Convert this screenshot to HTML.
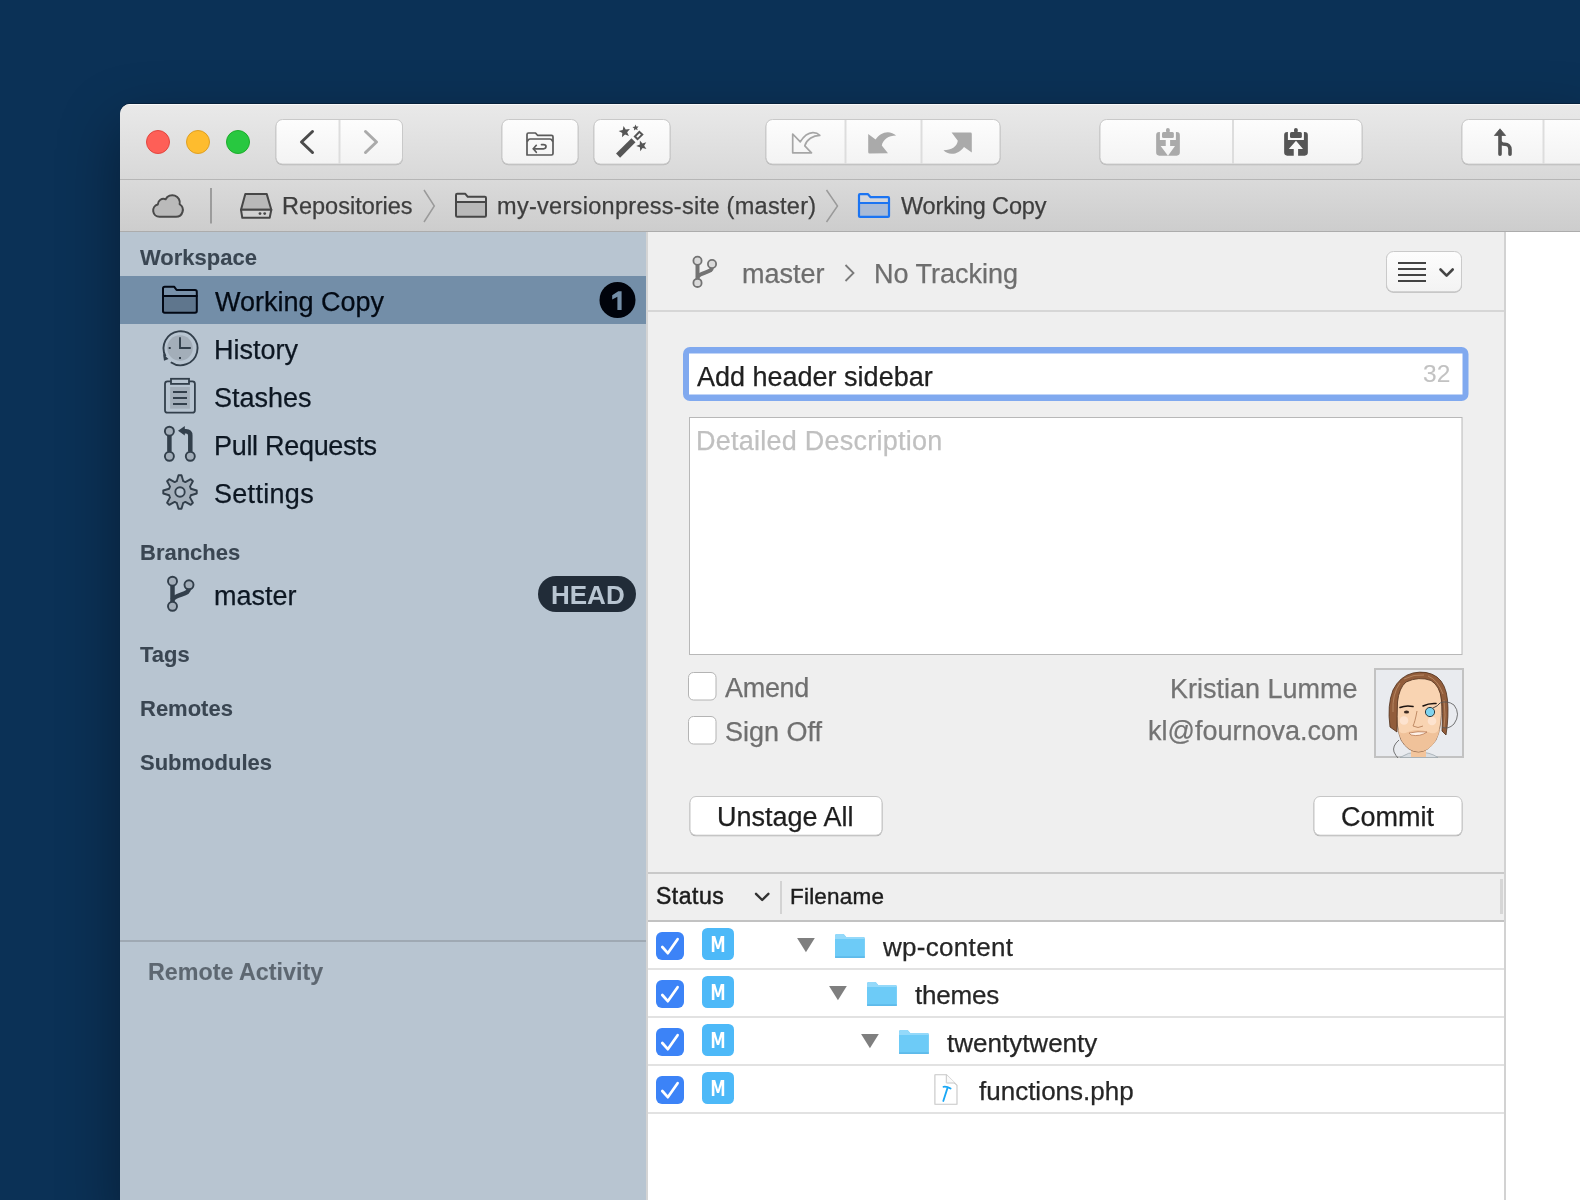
<!DOCTYPE html>
<html><head><meta charset="utf-8">
<style>
html,body{margin:0;padding:0;}
body{width:1580px;height:1200px;overflow:hidden;background:#0b3156;position:relative;font-family:"Liberation Sans",sans-serif;}
.a{position:absolute;}
.t{position:absolute;white-space:nowrap;line-height:normal;font-family:"Liberation Sans",sans-serif;will-change:transform;}
#win{left:120px;top:104px;width:1470px;height:1110px;border-radius:10px 0 0 0;overflow:hidden;background:#efefef;box-shadow:0 -1px 0 0 rgba(0,0,0,0.25),0 22px 60px rgba(0,0,0,0.38);}
#toolbar{left:0;top:0;width:1470px;height:75px;background:linear-gradient(#e9e9e9,#d8d8d8);border-top:1px solid #f9f9f9;}
#tbline{left:0;top:75px;width:1470px;height:1px;background:#b6b6b6;}
#crumb{left:0;top:76px;width:1470px;height:51px;background:linear-gradient(#dadada,#cdcdcd);}
#crline{left:0;top:127px;width:1470px;height:1px;background:#acacac;}
#side{left:0;top:128px;width:526px;height:1000px;background:#b8c5d1;}
#sidediv{left:526px;top:128px;width:2px;height:1000px;background:#d4d4d4;}
#main{left:528px;top:128px;width:856px;height:1000px;background:#efefef;}
#rline{left:1384px;top:128px;width:2px;height:1000px;background:#d2d2d2;}
#right{left:1386px;top:128px;width:200px;height:1000px;background:#ffffff;}
svg{position:absolute;left:0;top:0;}
</style></head>
<body>
<div id="win" class="a">
  <div id="toolbar" class="a"></div>
  <div id="tbline" class="a"></div>
  <div id="crumb" class="a"></div>
  <div id="crline" class="a"></div>
  <div id="side" class="a"></div>
  <div id="sidediv" class="a"></div>
  <div id="main" class="a"></div>
  <div id="rline" class="a"></div>
  <div id="right" class="a"></div>
</div>
<svg width="1580" height="1200" viewBox="0 0 1580 1200">
<circle cx="158" cy="142" r="11.5" fill="#fe5f57" stroke="#e2463f" stroke-width="1"/>
<circle cx="198" cy="142" r="11.5" fill="#febc2e" stroke="#dfa023" stroke-width="1"/>
<circle cx="238" cy="142" r="11.5" fill="#28c840" stroke="#1dad2b" stroke-width="1"/>
<defs><linearGradient id="bg" x1="0" y1="0" x2="0" y2="1"><stop offset="0" stop-color="#fdfdfd"/><stop offset="1" stop-color="#f3f3f3"/></linearGradient><linearGradient id="bb" x1="0" y1="0" x2="0" y2="1"><stop offset="0" stop-color="#ffffff"/><stop offset="1" stop-color="#ffffff"/></linearGradient></defs>
<rect x="275.5" y="120" width="127.5" height="45.3" rx="7" fill="#b9b9b9"/>
<rect x="276.0" y="119.5" width="126.5" height="44.6" rx="6.5" fill="url(#bg)" stroke="#c9c9c9" stroke-width="1"/>
<rect x="338.5" y="120" width="2" height="44" fill="#dddddd"/>
<rect x="501.5" y="120" width="77.0" height="45.3" rx="7" fill="#b9b9b9"/>
<rect x="502.0" y="119.5" width="76.0" height="44.6" rx="6.5" fill="url(#bg)" stroke="#c9c9c9" stroke-width="1"/>
<rect x="593.5" y="120" width="77.0" height="45.3" rx="7" fill="#b9b9b9"/>
<rect x="594.0" y="119.5" width="76.0" height="44.6" rx="6.5" fill="url(#bg)" stroke="#c9c9c9" stroke-width="1"/>
<rect x="765.5" y="120" width="235.0" height="45.3" rx="7" fill="#b9b9b9"/>
<rect x="766.0" y="119.5" width="234.0" height="44.6" rx="6.5" fill="url(#bg)" stroke="#c9c9c9" stroke-width="1"/>
<rect x="844.5" y="120" width="2" height="44" fill="#dddddd"/>
<rect x="920.5" y="120" width="2" height="44" fill="#dddddd"/>
<rect x="1099.5" y="120" width="263.0" height="45.3" rx="7" fill="#b9b9b9"/>
<rect x="1100.0" y="119.5" width="262.0" height="44.6" rx="6.5" fill="url(#bg)" stroke="#c9c9c9" stroke-width="1"/>
<rect x="1232" y="120" width="2" height="44" fill="#dddddd"/>
<rect x="1461.5" y="120" width="178.5" height="45.3" rx="7" fill="#b9b9b9"/>
<rect x="1462.0" y="119.5" width="177.5" height="44.6" rx="6.5" fill="url(#bg)" stroke="#c9c9c9" stroke-width="1"/>
<rect x="1542.5" y="120" width="2" height="44" fill="#dddddd"/>
<polyline points="312.5,131.5 301.5,142 312.5,152.5" fill="none" stroke="#4b4b4b" stroke-width="3" stroke-linecap="round" stroke-linejoin="round"/>
<polyline points="365.5,131.5 376.5,142 365.5,152.5" fill="none" stroke="#aaaaaa" stroke-width="3" stroke-linecap="round" stroke-linejoin="round"/>
<g fill="none" stroke="#5a5a5a" stroke-width="1.7" stroke-linejoin="round" stroke-linecap="round"><path d="M527,155 L527,134.5 Q527,133 528.5,133 L535.5,133 L537.5,135.3 L551.5,135.3 Q553,135.3 553,136.8 L553,153.5 Q553,155 551.5,155 Z"/><path d="M527.5,141 Q528.5,139 530,139 L550,139 Q551.5,139 552.5,141"/><path d="M533.5,148.8 L543.5,148.8 Q546,148.8 546,146.6 Q546,144.6 543.5,144.6 L541.5,144.6"/><path d="M536.3,145.3 L533.3,148.8 L536.3,152.3"/></g>
<g fill="#555555"><path d="M616.05,153.55 L631.45,138.33 L635.48,142.37 L620.08,157.77 Z"/><path d="M633.5,136.5 L639.3,130.45 L643.7,134.5 L637.5,140.6 Z M636.3,136.5 L639.4,133.3 L640.9,134.6 L637.8,137.8 Z" fill-rule="evenodd"/></g>
<polygon points="623.56,125.99 625.74,129.56 629.90,129.08 627.17,132.26 628.92,136.07 625.05,134.46 621.97,137.29 622.30,133.12 618.66,131.06 622.73,130.09" fill="#555555"/>
<polygon points="635.32,124.61 636.37,126.51 638.55,126.55 637.06,128.14 637.70,130.22 635.73,129.29 633.95,130.54 634.22,128.39 632.48,127.08 634.62,126.67" fill="#555555"/>
<polygon points="639.88,140.54 642.46,143.49 646.21,142.35 644.20,145.72 646.44,148.93 642.62,148.06 640.26,151.18 639.91,147.28 636.20,146.00 639.81,144.46" fill="#555555"/>
<path d="M792.7,152.8 L792.7,134 L800.3,141.8 C803.5,136.5 808,132.8 812.8,132.6 C815.5,132.5 818,133.5 819.8,135.3 C813,135.5 806.5,139.5 804.8,145.8 L811.5,152.8 Z" fill="none" stroke="#a6a6a6" stroke-width="1.7" stroke-linejoin="round"/>
<path d="M868.2,152 L868.2,134 L875.6,139.6 C878.5,135 883,132.2 887.7,132.2 C890.8,132.2 894,133.5 896.1,135.5 C888.5,135.5 883,139.5 881.8,145.5 L888,153.2 L869.5,153.5 Q868.2,153.5 868.2,152 Z" fill="#aaaaaa"/>
<path d="M971.8,134 L971.8,152.4 L964,146.9 C961,151 956.5,153.8 951.6,153.8 C948.5,153.8 945.5,152.3 943.5,150.2 C951.5,150.2 957,146.5 957.8,140.7 L951.6,132.6 L970.4,132.6 Q971.8,132.6 971.8,134 Z" fill="#aaaaaa"/>
<path d="M1156.15,135 Q1156.15,132 1159.2,132 L1159.9,132 L1159.9,139.9 L1175.9,139.9 L1175.9,132 L1176.7,132 Q1179.85,132 1179.85,135 L1179.85,152.6 Q1179.85,155.65 1176.7,155.65 L1159.2,155.65 Q1156.15,155.65 1156.15,152.6 Z M1165.75,139.9 L1170.1,139.9 L1170.1,146 L1175,146 L1168,155.65 L1160.65,146 L1165.75,146 Z" fill="#aaaaaa" fill-rule="evenodd"/>
<rect x="1162" y="132.1" width="11.85" height="5.9" rx="1.5" fill="#aaaaaa"/>
<rect x="1166" y="127.9" width="3.8" height="5" rx="1.9" fill="#aaaaaa"/>
<path d="M1284.15,135 Q1284.15,132 1287.2,132 L1287.9,132 L1287.9,139.9 L1303.9,139.9 L1303.9,132 L1304.7,132 Q1307.85,132 1307.85,135 L1307.85,152.6 Q1307.85,155.65 1304.7,155.65 L1287.2,155.65 Q1284.15,155.65 1284.15,152.6 Z M1296,140.8 L1303,148.9 L1298.1,148.9 L1298.1,155.65 L1293.75,155.65 L1293.75,148.9 L1288.8,148.9 Z" fill="#555555" fill-rule="evenodd"/>
<rect x="1290" y="132.1" width="11.85" height="5.9" rx="1.5" fill="#555555"/>
<rect x="1294" y="127.9" width="3.8" height="5" rx="1.9" fill="#555555"/>
<path d="M1494.4,135.5 L1500,128.8 L1505.6,135.5 Z" fill="#555555" stroke="#555555" stroke-width="0.8" stroke-linejoin="round"/>
<path d="M1500,135 L1500,154.2 M1500,140.5 C1500,143 1502.5,144.3 1505,144.3 C1508,144.3 1510,146.5 1510,149.5 L1510,154.2" fill="none" stroke="#555555" stroke-width="3.6" stroke-linecap="round"/>
<path d="M159.5,216.8 L176,216.8 A6.8,6.8 0 0 0 179.64,204.26 A7.5,7.5 0 0 0 165.66,199.2 A5.7,5.7 0 0 0 157.8,204.43 A6.3,6.3 0 0 0 159.5,216.8 Z" fill="#bababa" stroke="#4a4a4a" stroke-width="2" stroke-linejoin="round"/>
<line x1="211" y1="188" x2="211" y2="223.5" stroke="#8e8e8e" stroke-width="1.6"/>
<g stroke="#474747" stroke-width="2" stroke-linejoin="round"><path d="M245.3,193.9 L266.7,193.9 L271.3,209.8 L241,209.8 Z" fill="#b9b9b9"/><path d="M241,209.8 L271.3,209.8 L269.7,217.8 L242.3,217.8 Z" fill="#d2d2d2"/></g><circle cx="260" cy="213.6" r="1.4" fill="#474747"/><circle cx="264.7" cy="213.6" r="1.4" fill="#474747"/>
<polyline points="424,190 434.3,206 424,222" fill="none" stroke="#9a9a9a" stroke-width="1.5"/>
<polyline points="826.5,190 837.5,206 826.5,222" fill="none" stroke="#9a9a9a" stroke-width="1.5"/>
<g stroke="#474747" stroke-width="2" stroke-linejoin="round"><path d="M456,202 L456,195 Q456,193.8 457.2,193.8 L465.3,193.8 L467.8,196.8 L484.8,196.8 Q486,196.8 486,198 L486,202 Z" fill="#d6d6d6"/><path d="M456,202 L486,202 L486,215.6 Q486,216.8 484.8,216.8 L457.2,216.8 Q456,216.8 456,215.6 Z" fill="#b9b9b9"/></g>
<g stroke="#1b74f2" stroke-width="2.2" stroke-linejoin="round"><path d="M859,203 L859,195.2 Q859,194.2 860,194.2 L868,194.2 L870.6,197.2 L888,197.2 Q889,197.2 889,198.2 L889,203 Z" fill="#d3d6dc"/><path d="M859,203 L889,203 L889,215.9 Q889,216.9 888,216.9 L860,216.9 Q859,216.9 859,215.9 Z" fill="#a9bbd6"/></g>
<rect x="120" y="276" width="526" height="48" fill="#738ea8"/>
<g stroke="#020814" stroke-width="2" stroke-linejoin="round"><path d="M163,296 L163,288.5 Q163,286.8 164.7,286.8 L174.3,286.8 L176.6,290 L195,290 Q196.8,290 196.8,291.7 L196.8,296 Z" fill="#7891aa"/><path d="M163,296 L196.8,296 L196.8,311 Q196.8,312.8 195,312.8 L164.7,312.8 Q163,312.8 163,311 Z" fill="#5f768d"/></g>
<circle cx="617.5" cy="300" r="18" fill="#00030b"/>
<path d="M612.2,295.2 L618.3,291.2 L621.6,291.2 L621.6,310 L617.4,310 L617.4,296.8 L612.2,299.4 Z" fill="#738ea8"/>
<circle cx="180" cy="348" r="12.8" fill="#a3aeb9"/>
<path d="M170.8,362.2 A17,17 0 1 0 165.5,356.2" fill="none" stroke="#323f4b" stroke-width="1.9"/>
<path d="M163,353.8 L168.5,359 L164,360.8 Z" fill="#323f4b"/>
<path d="M180,337.2 L180,348 L190.8,348" fill="none" stroke="#323f4b" stroke-width="1.9"/>
<rect x="168.7" y="347" width="2" height="2" fill="#323f4b"/><rect x="179" y="357" width="2" height="2" fill="#323f4b"/>
<rect x="170.1" y="387" width="19.8" height="21.7" fill="#a3aeb9"/>
<path d="M171,381.3 L167.5,381.3 Q165,381.3 165,383.8 L165,410.2 Q165,412.7 167.5,412.7 L192.4,412.7 Q194.9,412.7 194.9,410.2 L194.9,383.8 Q194.9,381.3 192.4,381.3 L189,381.3" fill="none" stroke="#323f4b" stroke-width="1.8"/>
<rect x="171" y="378.8" width="18" height="5.1" fill="none" stroke="#323f4b" stroke-width="1.8"/>
<path d="M173,392 L187,392 M173,398 L187,398 M173,404 L187,404" stroke="#323f4b" stroke-width="1.8"/>
<path d="M169.4,436 L169.4,451.5" stroke="#323f4b" stroke-width="4.5"/>
<path d="M190.3,451.5 L190.3,435.5 Q190.3,431.2 186,431.2 L183,431.2" fill="none" stroke="#323f4b" stroke-width="4.5"/>
<path d="M178,430.8 L184.8,426 L184.8,435.6 Z" fill="#323f4b"/>
<circle cx="169.4" cy="431.2" r="4.5" fill="#a3aeb9" stroke="#323f4b" stroke-width="1.9"/>
<circle cx="169.4" cy="456.3" r="4.5" fill="#a3aeb9" stroke="#323f4b" stroke-width="1.9"/>
<circle cx="190.3" cy="456.3" r="4.5" fill="#a3aeb9" stroke="#323f4b" stroke-width="1.9"/>
<polygon points="175.68,481.56 176.75,481.18 178.50,475.27 181.50,475.27 183.25,481.18 184.32,481.56 185.35,482.05 190.77,479.11 192.89,481.23 189.95,486.65 190.44,487.68 190.82,488.75 196.73,490.50 196.73,493.50 190.82,495.25 190.44,496.32 189.95,497.35 192.89,502.77 190.77,504.89 185.35,501.95 184.32,502.44 183.25,502.82 181.50,508.73 178.50,508.73 176.75,502.82 175.68,502.44 174.65,501.95 169.23,504.89 167.11,502.77 170.05,497.35 169.56,496.32 169.18,495.25 163.27,493.50 163.27,490.50 169.18,488.75 169.56,487.68 170.05,486.65 167.11,481.23 169.23,479.11 174.65,482.05" fill="#a3aeb9" stroke="#323f4b" stroke-width="1.9" stroke-linejoin="round"/>
<circle cx="180" cy="492" r="4.7" fill="#b8c4d0" stroke="#323f4b" stroke-width="1.9"/>
<path d="M172.5,585.2 L172.5,602.2" stroke="#323f4b" stroke-width="4.5"/>
<path d="M172.5,599.7 C174.5,595.7 183.5,594.7 187.0,592.2 Q189.0,590.2 189.0,588.2" fill="none" stroke="#323f4b" stroke-width="4.5"/>
<circle cx="172.5" cy="581.2" r="4.5" fill="#a3aeb9" stroke="#323f4b" stroke-width="1.9"/>
<circle cx="172.5" cy="606.3000000000001" r="4.5" fill="#a3aeb9" stroke="#323f4b" stroke-width="1.9"/>
<circle cx="189.0" cy="584.8000000000001" r="4.5" fill="#a3aeb9" stroke="#323f4b" stroke-width="1.9"/>
<rect x="538" y="576" width="98" height="36" rx="18" fill="#212c38"/>
<rect x="120" y="940" width="526" height="2" fill="#9fa9b3"/>
<path d="M697.5,264.32 L697.5,279.28000000000003" stroke="#737373" stroke-width="4.0"/>
<path d="M697.5,277.08000000000004 C699.26,273.56 707.18,272.68 710.26,270.48 Q712.02,268.72 712.02,266.96000000000004" fill="none" stroke="#737373" stroke-width="4.0"/>
<circle cx="697.5" cy="260.8" r="4.1" fill="#dadada" stroke="#737373" stroke-width="1.8"/>
<circle cx="697.5" cy="282.88800000000003" r="4.1" fill="#dadada" stroke="#737373" stroke-width="1.8"/>
<circle cx="712.02" cy="263.968" r="4.1" fill="#dadada" stroke="#737373" stroke-width="1.8"/>
<polyline points="845.5,265 853.5,273 845.5,281" fill="none" stroke="#7a7a7a" stroke-width="1.8"/>
<rect x="648" y="310" width="856" height="2" fill="#d6d6d6"/>
<rect x="1386" y="252" width="76" height="40.8" rx="7.5" fill="#b9b9b9"/>
<rect x="1386.5" y="251.5" width="75" height="40.3" rx="7" fill="url(#bg)" stroke="#cacaca" stroke-width="1"/>
<path d="M1398,263 L1426,263 M1398,269 L1426,269 M1398,275 L1426,275 M1398,281 L1426,281" stroke="#444444" stroke-width="2"/>
<polyline points="1440.5,269.5 1446.6,275.6 1452.7,269.5" fill="none" stroke="#444444" stroke-width="2.6" stroke-linecap="round" stroke-linejoin="round"/>
<rect x="683" y="347" width="785.5" height="54" rx="7" fill="#80a9ef"/>
<rect x="689" y="353.5" width="773.5" height="41" fill="#ffffff"/>
<rect x="689.5" y="417.5" width="772.5" height="237" fill="#ffffff" stroke="#b8b8b8" stroke-width="1"/>
<rect x="688.5" y="672.5" width="27.5" height="27.5" rx="5" fill="#ffffff" stroke="#b4b4b4" stroke-width="1"/>
<rect x="688.5" y="716.5" width="27.5" height="27.5" rx="5" fill="#ffffff" stroke="#b4b4b4" stroke-width="1"/>
<rect x="1375" y="669" width="88" height="88" fill="#e9ebef" stroke="#c2c2c2" stroke-width="2"/>
<rect x="689.5" y="797" width="193.0" height="39.3" rx="6.5" fill="#b3b3b3"/>
<rect x="690.0" y="796.5" width="192.0" height="38.7" rx="6" fill="#ffffff" stroke="#c6c6c6" stroke-width="1"/>
<rect x="1313.5" y="797" width="149.0" height="39.3" rx="6.5" fill="#b3b3b3"/>
<rect x="1314.0" y="796.5" width="148.0" height="38.7" rx="6" fill="#ffffff" stroke="#c6c6c6" stroke-width="1"/>
<rect x="648" y="872" width="856" height="2" fill="#c9c9c9"/>
<rect x="648" y="874" width="856" height="46" fill="#efefef"/>
<rect x="648" y="920" width="856" height="2" fill="#c2c2c2"/>
<rect x="648" y="922" width="856" height="300" fill="#ffffff"/>
<rect x="780" y="881" width="2" height="33" fill="#d3d3d3"/>
<rect x="1500" y="879" width="3" height="35" fill="#d6d6d6"/>
<polyline points="756,893.8 762.2,900 768.4,893.8" fill="none" stroke="#333333" stroke-width="2.4" stroke-linecap="round" stroke-linejoin="round"/>
<rect x="648" y="968" width="856" height="2" fill="#e2e2e2"/>
<rect x="656" y="932" width="28" height="28" rx="6" fill="#3c83f7"/>
<polyline points="662.3,947 667.8,953.2 677.6,939.2" fill="none" stroke="#ffffff" stroke-width="2.7" stroke-linecap="round" stroke-linejoin="round"/>
<rect x="702" y="928" width="32" height="32" rx="5.5" fill="#4db9f8"/>
<polygon points="711.8,952.0 711.8,936.0 715.2,936.0 718.0,945.6 720.8,936.0 724.2,936.0 724.2,952.0 721.6,952.0 721.6,941.0 719.1,949.0 716.9,949.0 714.4,941.0 714.4,952.0" fill="#ffffff"/>
<polygon points="797.1,938.1 814.8,938.1 805.95,952.3" fill="#7f7f7f"/>
<path d="M835,955.9 L835,935.8 Q835,934.1 836.7,934.1 L843.6,934.1 L846.2,937.1 L863.2,937.1 Q864.9,937.1 864.9,938.8 L864.9,956.2 Q864.9,957.9 863.2,957.9 L836.7,957.9 Q835,957.9 835,956.2 Z" fill="#6dcbf7"/>
<path d="M835,936 Q835,934.1 836.7,934.1 L843.6,934.1 L846.2,937.1 L863.2,937.1 Q864.9,937.1 864.9,938.8 L864.9,939 L835,939 Z" fill="#94d9fa"/>
<rect x="835" y="956.3" width="29.9" height="1.6" fill="#5cb8e8"/>
<rect x="648" y="1016" width="856" height="2" fill="#e2e2e2"/>
<rect x="656" y="980" width="28" height="28" rx="6" fill="#3c83f7"/>
<polyline points="662.3,995 667.8,1001.2 677.6,987.2" fill="none" stroke="#ffffff" stroke-width="2.7" stroke-linecap="round" stroke-linejoin="round"/>
<rect x="702" y="976" width="32" height="32" rx="5.5" fill="#4db9f8"/>
<polygon points="711.8,1000.0 711.8,984.0 715.2,984.0 718.0,993.6 720.8,984.0 724.2,984.0 724.2,1000.0 721.6,1000.0 721.6,989.0 719.1,997.0 716.9,997.0 714.4,989.0 714.4,1000.0" fill="#ffffff"/>
<polygon points="829.1,986.1 846.8,986.1 837.95,1000.3" fill="#7f7f7f"/>
<path d="M867,1003.9 L867,983.8 Q867,982.1 868.7,982.1 L875.6,982.1 L878.2,985.1 L895.2,985.1 Q896.9,985.1 896.9,986.8 L896.9,1004.2 Q896.9,1005.9 895.2,1005.9 L868.7,1005.9 Q867,1005.9 867,1004.2 Z" fill="#6dcbf7"/>
<path d="M867,984 Q867,982.1 868.7,982.1 L875.6,982.1 L878.2,985.1 L895.2,985.1 Q896.9,985.1 896.9,986.8 L896.9,987 L867,987 Z" fill="#94d9fa"/>
<rect x="867" y="1004.3" width="29.9" height="1.6" fill="#5cb8e8"/>
<rect x="648" y="1064" width="856" height="2" fill="#e2e2e2"/>
<rect x="656" y="1028" width="28" height="28" rx="6" fill="#3c83f7"/>
<polyline points="662.3,1043 667.8,1049.2 677.6,1035.2" fill="none" stroke="#ffffff" stroke-width="2.7" stroke-linecap="round" stroke-linejoin="round"/>
<rect x="702" y="1024" width="32" height="32" rx="5.5" fill="#4db9f8"/>
<polygon points="711.8,1048.0 711.8,1032.0 715.2,1032.0 718.0,1041.6 720.8,1032.0 724.2,1032.0 724.2,1048.0 721.6,1048.0 721.6,1037.0 719.1,1045.0 716.9,1045.0 714.4,1037.0 714.4,1048.0" fill="#ffffff"/>
<polygon points="861.1,1034.1 878.8,1034.1 869.95,1048.3" fill="#7f7f7f"/>
<path d="M899,1051.9 L899,1031.8 Q899,1030.1 900.7,1030.1 L907.6,1030.1 L910.2,1033.1 L927.2,1033.1 Q928.9,1033.1 928.9,1034.8 L928.9,1052.2 Q928.9,1053.9 927.2,1053.9 L900.7,1053.9 Q899,1053.9 899,1052.2 Z" fill="#6dcbf7"/>
<path d="M899,1032 Q899,1030.1 900.7,1030.1 L907.6,1030.1 L910.2,1033.1 L927.2,1033.1 Q928.9,1033.1 928.9,1034.8 L928.9,1035 L899,1035 Z" fill="#94d9fa"/>
<rect x="899" y="1052.3" width="29.9" height="1.6" fill="#5cb8e8"/>
<rect x="648" y="1112" width="856" height="2" fill="#e2e2e2"/>
<rect x="656" y="1076" width="28" height="28" rx="6" fill="#3c83f7"/>
<polyline points="662.3,1091 667.8,1097.2 677.6,1083.2" fill="none" stroke="#ffffff" stroke-width="2.7" stroke-linecap="round" stroke-linejoin="round"/>
<rect x="702" y="1072" width="32" height="32" rx="5.5" fill="#4db9f8"/>
<polygon points="711.8,1096.0 711.8,1080.0 715.2,1080.0 718.0,1089.6 720.8,1080.0 724.2,1080.0 724.2,1096.0 721.6,1096.0 721.6,1085.0 719.1,1093.0 716.9,1093.0 714.4,1085.0 714.4,1096.0" fill="#ffffff"/>
<path d="M934.9,1074.7 L946.3,1074.7 L957,1085.3 L957,1104.2 L934.9,1104.2 Z" fill="#ffffff" stroke="#c6c6c6" stroke-width="1.1" stroke-linejoin="round"/>
<path d="M946.3,1074.7 L946.3,1082.6 Q946.3,1083 946.7,1083 L955,1083" fill="#fafafa" stroke="#c6c6c6" stroke-width="1"/>
<path d="M943.5,1086.8 Q947,1086.3 950.6,1088.5 M947.6,1087.6 L943.3,1101" fill="none" stroke="#1aa7f5" stroke-width="1.8" stroke-linecap="round"/>
<g><path d="M1400,757.5 Q1408,752 1418,752 Q1430,752 1438,757.5 Z" fill="#d8dde2" stroke="#9aa3aa" stroke-width="0.7"/><rect x="1411" y="746" width="15" height="11" fill="#f3c59c"/><path d="M1396.5,704 Q1396,686 1405,679 Q1418,672 1432,677 Q1442,684 1441.5,704 Q1442,728 1436,740 Q1428,752 1418.5,752 Q1408,752 1401,740 Q1396,728 1396.5,704 Z" fill="#f9d4b2" stroke="#7a5136" stroke-width="0.7"/><path d="M1397.5,728 Q1401,744 1410,749 Q1418,754 1428,749 Q1437,743 1440,728 Q1436,736 1428,732 Q1418,728 1408,732 Q1400,736 1397.5,728 Z" fill="#f0c29a"/><circle cx="1404" cy="720.5" r="4.3" fill="#fde3cf"/><circle cx="1432" cy="721" r="4.3" fill="#fde3cf"/><path d="M1390,727 Q1387,705 1393,690 Q1400,676 1413,673 Q1427,670 1437,677 Q1446,684 1447.5,700 Q1449,716 1446,735 L1442,731 Q1443,712 1441.5,700 Q1440,686 1431,680.5 Q1419,676 1406,682 Q1399,688 1397.5,702 Q1397,716 1397,732 Z" fill="#925d3b" stroke="#4e2e1a" stroke-width="0.8" stroke-linejoin="round"/><path d="M1393,712 Q1392,694 1400,683 M1404,679 Q1414,674 1424,675 M1428,676 Q1438,680 1443,694 M1444,700 Q1446,716 1444,728" fill="none" stroke="#c79a74" stroke-width="0.8" opacity="0.8"/><path d="M1400,707.5 Q1406,705 1413,706.5" fill="none" stroke="#1d1410" stroke-width="1.6" stroke-linecap="round"/><path d="M1423,706 Q1429,703 1436,703.5" fill="none" stroke="#1d1410" stroke-width="1.6" stroke-linecap="round"/><ellipse cx="1406.5" cy="712" rx="2.6" ry="1.5" fill="#3b2a22"/><circle cx="1430" cy="712" r="4.6" fill="#7fd3ee" stroke="#2d3a40" stroke-width="1"/><path d="M1433,708 Q1438,706 1440,703" fill="none" stroke="#333333" stroke-width="0.9"/><path d="M1440,703 Q1447,700 1454,705 Q1461,714 1454,724 Q1448,730 1442,727" fill="none" stroke="#555555" stroke-width="0.8"/><path d="M1399,740 Q1392,746 1394,752 Q1396,756 1398,758" fill="none" stroke="#555555" stroke-width="0.8"/><path d="M1417,711 Q1415,722 1413,726 Q1418,729 1423,726" fill="none" stroke="#b9825c" stroke-width="0.9"/><path d="M1409,733 Q1418,731 1427,732 Q1420,737 1411,735 Z" fill="#fff2e8" stroke="#b77a55" stroke-width="0.8"/></g>
</svg>
<div class="t" style="left:282.0px;top:193.0px;font-size:23.5px;color:#3e3e3e;-webkit-text-stroke:0.25px #3e3e3e;">Repositories</div>
<div class="t" style="left:496.5px;top:193.0px;font-size:23.5px;color:#3e3e3e;letter-spacing:0.3px;-webkit-text-stroke:0.25px #3e3e3e;">my-versionpress-site (master)</div>
<div class="t" style="left:901.0px;top:193.0px;font-size:23.5px;color:#3e3e3e;letter-spacing:-0.15px;-webkit-text-stroke:0.25px #3e3e3e;">Working Copy</div>
<div class="t" style="left:140.0px;top:245.0px;font-size:22px;color:#3a4652;font-weight:700;-webkit-text-stroke:0.1px #3a4652;">Workspace</div>
<div class="t" style="left:215.0px;top:287.0px;font-size:27px;color:#030a14;-webkit-text-stroke:0.25px #030a14;">Working Copy</div>
<div class="t" style="left:214.0px;top:335.0px;font-size:27px;color:#0d1722;-webkit-text-stroke:0.25px #0d1722;">History</div>
<div class="t" style="left:214.0px;top:383.0px;font-size:27px;color:#0d1722;-webkit-text-stroke:0.25px #0d1722;">Stashes</div>
<div class="t" style="left:213.5px;top:431.0px;font-size:27px;color:#0d1722;letter-spacing:-0.3px;-webkit-text-stroke:0.25px #0d1722;">Pull Requests</div>
<div class="t" style="left:214.0px;top:479.0px;font-size:27px;color:#0d1722;letter-spacing:0.3px;-webkit-text-stroke:0.25px #0d1722;">Settings</div>
<div class="t" style="left:140.0px;top:540.0px;font-size:22px;color:#3a4652;font-weight:700;-webkit-text-stroke:0.1px #3a4652;">Branches</div>
<div class="t" style="left:214.0px;top:581.0px;font-size:27px;color:#0d1722;-webkit-text-stroke:0.25px #0d1722;">master</div>
<div class="t" style="left:140.0px;top:642.0px;font-size:22px;color:#3a4652;font-weight:700;-webkit-text-stroke:0.1px #3a4652;">Tags</div>
<div class="t" style="left:140.0px;top:696.0px;font-size:22px;color:#3a4652;font-weight:700;-webkit-text-stroke:0.1px #3a4652;">Remotes</div>
<div class="t" style="left:140.0px;top:750.0px;font-size:22px;color:#3a4652;font-weight:700;-webkit-text-stroke:0.1px #3a4652;">Submodules</div>
<div class="t" style="left:148.0px;top:959.0px;font-size:23.3px;color:#5d6771;font-weight:700;-webkit-text-stroke:0.1px #5d6771;">Remote Activity</div>
<div class="t" style="left:741.5px;top:259.0px;font-size:27px;color:#6e6e6e;-webkit-text-stroke:0.25px #6e6e6e;">master</div>
<div class="t" style="left:874.0px;top:259.0px;font-size:27px;color:#6e6e6e;-webkit-text-stroke:0.25px #6e6e6e;">No Tracking</div>
<div class="t" style="left:697.0px;top:362.0px;font-size:27px;color:#202020;-webkit-text-stroke:0.25px #202020;">Add header sidebar</div>
<div class="t" style="left:1422.5px;top:360.0px;font-size:24.5px;color:#c2c2c2;-webkit-text-stroke:0.1px #c2c2c2;">32</div>
<div class="t" style="left:695.5px;top:426.0px;font-size:27px;color:#c0c0c0;letter-spacing:0.25px;-webkit-text-stroke:0.25px #c0c0c0;">Detailed Description</div>
<div class="t" style="left:725.0px;top:673.0px;font-size:27px;color:#6f6f6f;letter-spacing:-0.3px;-webkit-text-stroke:0.25px #6f6f6f;">Amend</div>
<div class="t" style="left:724.5px;top:717.0px;font-size:27px;color:#6f6f6f;-webkit-text-stroke:0.25px #6f6f6f;">Sign Off</div>
<div class="t" style="left:1169.5px;top:674.0px;font-size:27px;color:#737373;-webkit-text-stroke:0.25px #737373;">Kristian Lumme</div>
<div class="t" style="left:1148.0px;top:716.0px;font-size:27px;color:#737373;-webkit-text-stroke:0.25px #737373;">kl@fournova.com</div>
<div class="t" style="left:716.5px;top:802.0px;font-size:27px;color:#1e1e1e;-webkit-text-stroke:0.25px #1e1e1e;">Unstage All</div>
<div class="t" style="left:1340.5px;top:802.0px;font-size:27px;color:#1e1e1e;-webkit-text-stroke:0.25px #1e1e1e;">Commit</div>
<div class="t" style="left:655.5px;top:883.0px;font-size:23px;color:#1c1c1c;letter-spacing:0.5px;-webkit-text-stroke:0.5px #1c1c1c;">Status</div>
<div class="t" style="left:789.5px;top:884.0px;font-size:22.5px;color:#1c1c1c;letter-spacing:0.2px;-webkit-text-stroke:0.4px #1c1c1c;">Filename</div>
<div class="t" style="left:883.0px;top:932.0px;font-size:26px;color:#262626;letter-spacing:0.3px;-webkit-text-stroke:0.25px #262626;">wp-content</div>
<div class="t" style="left:914.5px;top:980.0px;font-size:26px;color:#262626;letter-spacing:-0.2px;-webkit-text-stroke:0.25px #262626;">themes</div>
<div class="t" style="left:947.0px;top:1028.0px;font-size:26px;color:#262626;-webkit-text-stroke:0.25px #262626;">twentytwenty</div>
<div class="t" style="left:979.0px;top:1076.0px;font-size:26px;color:#262626;-webkit-text-stroke:0.25px #262626;">functions.php</div>
<div class="t" style="left:551px;top:580px;font-size:26px;font-weight:700;color:#b8c5d1;line-height:30px;">HEAD</div>
</body></html>
